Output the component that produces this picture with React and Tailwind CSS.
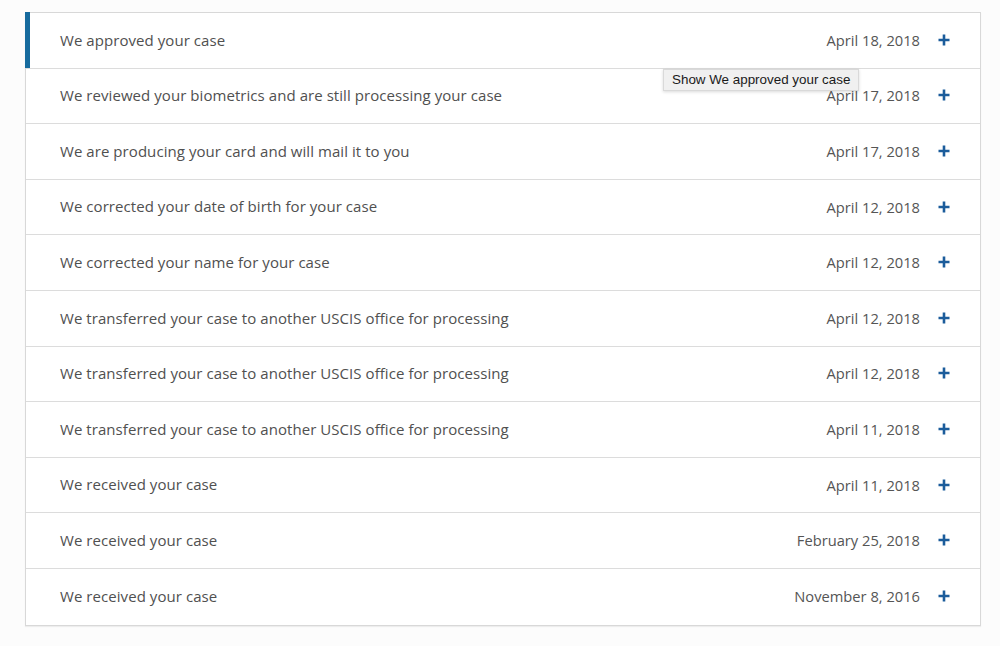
import React from "react";

const events = [
  { title: "We approved your case", date: "April 18, 2018", active: true },
  { title: "We reviewed your biometrics and are still processing your case", date: "April 17, 2018" },
  { title: "We are producing your card and will mail it to you", date: "April 17, 2018" },
  { title: "We corrected your date of birth for your case", date: "April 12, 2018" },
  { title: "We corrected your name for your case", date: "April 12, 2018" },
  { title: "We transferred your case to another USCIS office for processing", date: "April 12, 2018" },
  { title: "We transferred your case to another USCIS office for processing", date: "April 12, 2018" },
  { title: "We transferred your case to another USCIS office for processing", date: "April 11, 2018" },
  { title: "We received your case", date: "April 11, 2018" },
  { title: "We received your case", date: "February 25, 2018" },
  { title: "We received your case", date: "November 8, 2016" },
];

const PlusIcon = () => (
  <svg width="12" height="12" viewBox="0 0 12 12" className="shrink-0">
    <path d="M4.7 0.5h2.6v4.2h4.2v2.6H7.3v4.2H4.7V7.3H0.5V4.7h4.2z" fill="#1b5c9b" />
  </svg>
);

const CaseRow = ({ event }) => {
  return (
    <div className="relative flex items-center h-[55.6px] pl-[34px] pr-[30px] pb-[1px]">
      {/* active marker */}
      {event.active && <div className="absolute left-[-1px] top-[-1px] bottom-0 w-[5px] bg-[#176b9e]" />}
      <div className="flex-grow text-[15px] tracking-[0.06px] text-[#505050]">{event.title}</div>
      <div className="text-[14.7px] text-[#555555] mr-[18px]">{event.date}</div>
      <PlusIcon />
    </div>
  );
};

export default function App() {
  return (
    <div
      className="relative w-[1000px] h-[646px] bg-[#fcfcfc] pt-[12px] pl-[25px]"
      style={{ fontFamily: "'Open Sans', Lato, sans-serif" }}
    >
      <div className="w-[956px] bg-white border border-[#d8d8d8] divide-y divide-[#dcdcdc] shadow-[0_1px_1px_rgba(0,0,0,0.06)]">
        {events.map((event, i) => (
          <CaseRow key={i} event={event} />
        ))}
      </div>

      {/* Tooltip */}
      <div
        className="absolute left-[663px] top-[69px] h-[22px] px-[8px] flex items-center bg-[#f0f0f0] border border-[#d9d9d9] shadow-[0_1px_3px_rgba(0,0,0,0.15)] text-[13.4px] text-[#1a1a1a]"
        style={{ fontFamily: "'Liberation Sans', Arial, sans-serif" }}
      >
        Show We approved your case
      </div>
    </div>
  );
}
